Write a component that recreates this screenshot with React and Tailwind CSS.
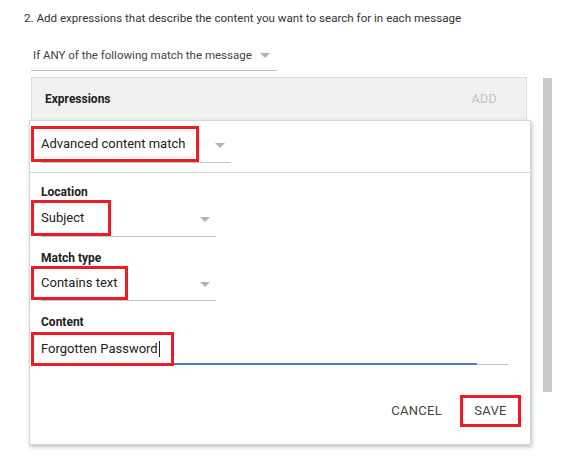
function Caret({ className = '' }) {
    return (
        <svg width="10" height="5" viewBox="0 0 10 5" className={className}>
            <path d="M0 0 L10 0 L5 5 Z" fill="#b3b3b3" />
        </svg>
    );
}

function RedBox({ children, className = '' }) {
    return (
        <div className={`-ml-[10px] border-[3px] border-[#ed1c24] pl-[7px] flex items-center text-[13px] text-[#222] whitespace-nowrap ${className}`}>
            {children}
        </div>
    );
}

function SelectField({ label, value, boxWidth, width, height = 'h-[36px]' }) {
    return (
        <div className="flex flex-col">
            {label && <div className="text-[12px] font-bold text-[#222] leading-[16px]">{label}</div>}
            <div className={`flex items-center justify-between border-b border-[#c4c4c4] ${width}`}>
                <RedBox className={`${boxWidth} ${height}`}>{value}</RedBox>
                <Caret className="mr-[6px] mt-[2px]" />
            </div>
        </div>
    );
}

export default function App() {
    return (
        <div className="w-[569px] h-[475px] bg-white overflow-hidden" style={{ fontFamily: 'Roboto, "Liberation Sans", sans-serif' }}>
            <div className="pl-[24px] pt-[10px] text-[11.6px] text-[#333] leading-[16px] whitespace-nowrap">
                2. Add expressions that describe the content you want to search for in each message
            </div>

            <div className="ml-[31px] mt-[21px] w-[246px] border-b border-[#bdbdbd] flex items-center pl-[2px] pb-[7px] text-[11.5px] text-[#444] leading-[16px] whitespace-nowrap">
                <span>If ANY of the following match the message</span>
                <Caret className="ml-[8px] mt-[1px]" />
            </div>

            <div className="flex mt-[6px]">
                {/* Expressions panel */}
                <div className="ml-[31px] w-[496px]">
                    <div className="h-[43px] bg-[#f1f1f1] border border-[#dcdcdc] border-b-0 flex items-center justify-between pl-[13px] pr-[29px]">
                        <span className="text-[12px] font-bold text-[#222]">Expressions</span>
                        <span className="text-[12.5px] text-[#c2c2c2] tracking-[0.3px]">ADD</span>
                    </div>

                    {/* Card */}
                    <div className="-ml-[2px] w-[502px] h-[325px] bg-white border border-[#d6d6d6] shadow-[1px_2px_4px_rgba(0,0,0,0.25)]">
                        <div className="h-[52px] pl-[11px] pt-[5px] border-b border-[#d6d6d6]">
                            <div className="flex items-center justify-between border-b border-[#c4c4c4] w-[190px]">
                                <RedBox className="w-[168px] h-[36px]">Advanced content match</RedBox>
                                <Caret className="mr-[6px] mt-[2px]" />
                            </div>
                        </div>

                        <div className="pl-[11px] pt-[11px] flex flex-col">
                            <SelectField label="Location" value="Subject" boxWidth="w-[80px]" width="w-[175px]" />
                            <div className="mt-[13px]">
                                <SelectField label="Match type" value="Contains text" boxWidth="w-[97px]" width="w-[175px]" height="h-[34px]" />
                            </div>

                            <div className="mt-[13px] flex flex-col">
                                <div className="text-[12px] font-bold text-[#222] leading-[16px]">Content</div>
                                <div className="mt-[2px] flex items-end w-[467px]">
                                    <RedBox className="w-[143px] h-[34px] shrink-0">
                                        Forgotten Password<span className="inline-block w-px h-[16px] bg-[#222] ml-px" />
                                    </RedBox>
                                    <div className="flex-1 h-[2px] bg-[#4a7bd0] mb-[1px]" />
                                    <div className="w-[31px] h-px bg-[#bdbdbd] mb-[1px]" />
                                </div>
                            </div>

                            <div className="flex justify-end items-center mt-[29px] pr-[9px] gap-[18px]">
                                <span className="text-[13px] text-[#444] tracking-[0.3px]">CANCEL</span>
                                <div className="w-[61px] h-[32px] border-[3px] border-[#ed1c24] flex items-center justify-center text-[13px] text-[#444] tracking-[0.3px]">
                                    SAVE
                                </div>
                            </div>
                        </div>
                    </div>
                </div>

                {/* Scrollbar */}
                <div className="ml-[16px] mt-[1px] w-[9px] h-[314px] bg-[#c9c9c9]" />
            </div>
        </div>
    );
}
